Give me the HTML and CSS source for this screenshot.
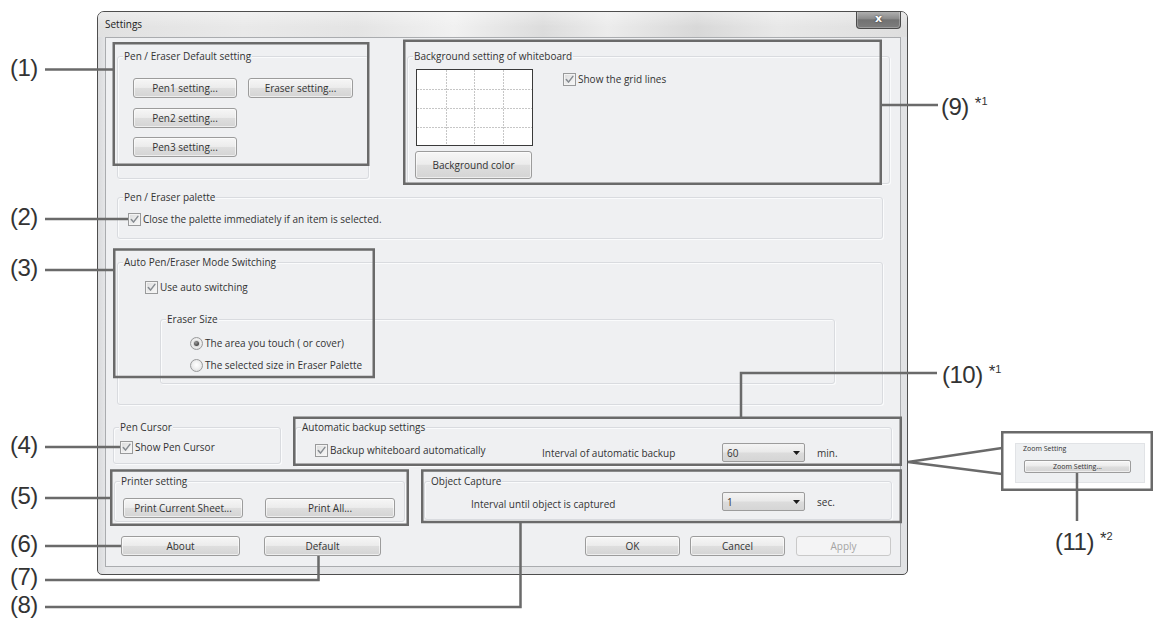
FILE: index.html
```html
<!DOCTYPE html>
<html lang="en">
<head>
<meta charset="utf-8">
<title>Settings</title>
<link rel="stylesheet" href="styles.css">
</head>
<body>
<div class="figure">
  <div class="dialog">
    <div class="titlebar">
      <span class="title">Settings</span>
      <span class="close">x</span>
    </div>
    <div class="client">
      <div class="row row-a">
        <div class="gb gb-pen">
          <div class="gb-title">Pen / Eraser Default setting</div>
          <div class="pen-grid">
            <button class="btn">Pen1 setting...</button>
            <button class="btn">Eraser setting...</button>
            <button class="btn">Pen2 setting...</button>
            <span></span>
            <button class="btn">Pen3 setting...</button>
          </div>
        </div>
        <div class="gb gb-bg">
          <div class="gb-title">Background setting of whiteboard</div>
          <div class="bg-body">
            <div class="bg-left">
              <div class="preview">
                <svg width="115" height="75" viewBox="0 0 115 75">
                  <g stroke="#c6c6c6" stroke-width="1" stroke-dasharray="2 1">
                    <line x1="29.5" y1="0" x2="29.5" y2="75"/>
                    <line x1="57.5" y1="0" x2="57.5" y2="75"/>
                    <line x1="86.5" y1="0" x2="86.5" y2="75"/>
                    <line x1="0" y1="19.5" x2="115" y2="19.5"/>
                    <line x1="0" y1="38.5" x2="115" y2="38.5"/>
                    <line x1="0" y1="57.5" x2="115" y2="57.5"/>
                  </g>
                </svg>
              </div>
              <button class="btn btn-bgcolor">Background color</button>
            </div>
            <label class="check check-grid"><span class="cb"><svg viewBox="0 0 11 11"><path d="M2.3 5.6L4.5 8.1L8.9 2.4"/></svg></span><span>Show the grid lines</span></label>
          </div>
        </div>
      </div>

      <div class="row row-b">
        <div class="gb gb-wide">
          <div class="gb-title">Pen / Eraser palette</div>
          <label class="check check-palette"><span class="cb"><svg viewBox="0 0 11 11"><path d="M2.3 5.6L4.5 8.1L8.9 2.4"/></svg></span><span>Close the palette immediately if an item is selected.</span></label>
        </div>
      </div>

      <div class="row row-c">
        <div class="gb gb-wide gb-auto">
          <div class="gb-title">Auto Pen/Eraser Mode Switching</div>
          <label class="check check-auto"><span class="cb"><svg viewBox="0 0 11 11"><path d="M2.3 5.6L4.5 8.1L8.9 2.4"/></svg></span><span>Use auto switching</span></label>
          <div class="gb gb-eraser">
            <div class="gb-title">Eraser Size</div>
            <div class="radio-list">
              <label class="radio"><span class="rb"><span class="dot"></span></span><span>The area you touch ( or cover)</span></label>
              <label class="radio"><span class="rb"></span><span>The selected size in Eraser Palette</span></label>
            </div>
          </div>
        </div>
      </div>

      <div class="row row-d">
        <div class="gb gb-cursor">
          <div class="gb-title">Pen Cursor</div>
          <label class="check check-cursor"><span class="cb"><svg viewBox="0 0 11 11"><path d="M2.3 5.6L4.5 8.1L8.9 2.4"/></svg></span><span>Show Pen Cursor</span></label>
        </div>
        <div class="gb gb-backup">
          <div class="gb-title">Automatic backup settings</div>
          <div class="field-row backup-row">
            <label class="check check-backup"><span class="cb"><svg viewBox="0 0 11 11"><path d="M2.3 5.6L4.5 8.1L8.9 2.4"/></svg></span><span>Backup whiteboard automatically</span></label>
            <span class="lbl-backup">Interval of automatic backup</span>
            <div class="combo"><span>60</span><svg width="7" height="4" viewBox="0 0 7 4"><path d="M0 0H7L3.5 4Z"/></svg></div>
            <span class="unit">min.</span>
          </div>
        </div>
      </div>

      <div class="row row-e">
        <div class="gb gb-print">
          <div class="gb-title">Printer setting</div>
          <div class="print-row">
            <button class="btn btn-current">Print Current Sheet...</button>
            <button class="btn btn-all">Print All...</button>
          </div>
        </div>
        <div class="gb gb-capture">
          <div class="gb-title">Object Capture</div>
          <div class="field-row capture-row">
            <span class="lbl-capture">Interval until object is captured</span>
            <div class="combo"><span>1</span><svg width="7" height="4" viewBox="0 0 7 4"><path d="M0 0H7L3.5 4Z"/></svg></div>
            <span class="unit">sec.</span>
          </div>
        </div>
      </div>

      <div class="row row-f">
        <button class="btn btn-about">About</button>
        <button class="btn btn-default">Default</button>
        <button class="btn btn-ok">OK</button>
        <button class="btn btn-cancel">Cancel</button>
        <button class="btn btn-apply btn-disabled">Apply</button>
      </div>
    </div>
  </div>

  <div class="inset">
    <div class="zoom-panel">
      <div class="zoom-title">Zoom Setting</div>
      <button class="btn zoom-btn">Zoom Setting...</button>
    </div>
  </div>

  <svg class="annot" width="1159" height="625" viewBox="0 0 1159 625">
    <g fill="none" stroke="#6a6a6a" stroke-width="2.5">
      <rect x="113.75" y="43.25" width="254.5" height="121.5"/>
      <rect x="404.25" y="40.75" width="476.5" height="143"/>
      <rect x="114.25" y="249.5" width="259.5" height="127.5"/>
      <rect x="294.25" y="417.75" width="606.5" height="47"/>
      <rect x="111.25" y="470.5" width="296.5" height="54.25"/>
      <rect x="422.25" y="470.5" width="478.5" height="51.5"/>
      <rect x="1002.25" y="432.25" width="149.5" height="57.5"/>
      <path d="M45 69.5H113"/>
      <path d="M45 219H128"/>
      <path d="M45 270H114"/>
      <path d="M45 447H120"/>
      <path d="M45 498H111"/>
      <path d="M45 546H121"/>
      <path d="M45 580H318.5V556"/>
      <path d="M45 607H520.5V522"/>
      <path d="M881 105H938"/>
      <path d="M741 418V373H937"/>
      <path d="M1077 473V521"/>
      <path d="M1002 448L908 462L1002 474"/>
    </g>
  </svg>

  <span class="lbl l1">(1)</span>
  <span class="lbl l2">(2)</span>
  <span class="lbl l3">(3)</span>
  <span class="lbl l4">(4)</span>
  <span class="lbl l5">(5)</span>
  <span class="lbl l6">(6)</span>
  <span class="lbl l7">(7)</span>
  <span class="lbl l8">(8)</span>
  <span class="lbl l9">(9)<span class="note">*<sup>1</sup></span></span>
  <span class="lbl l10">(10)<span class="note">*<sup>1</sup></span></span>
  <span class="lbl l11">(11)<span class="note">*<sup>2</sup></span></span>
</div>
</body>
</html>
```

FILE: styles.css
```css
* { box-sizing: border-box; }

html, body {
  margin: 0;
  padding: 0;
  background: #ffffff;
}

body {
  font-family: "Open Sans", "Noto Sans", "DejaVu Sans", sans-serif;
  font-size: 10px;
  color: #333333;
}

.figure {
  position: relative;
  width: 1159px;
  height: 625px;
  overflow: hidden;
  padding: 11px 0 0 97px;
}

/* ---------- window ---------- */
.dialog {
  width: 811px;
  height: 564px;
  border: 1px solid #4e4e4e;
  border-radius: 7px 7px 5px 5px;
  background: linear-gradient(90deg, #d9dadc 0%, #e6e7e9 1%, #e1e2e4 100%);
  padding: 0 6px 7px 7px;
  display: flex;
  flex-direction: column;
  overflow: hidden;
}

.titlebar {
  flex: none;
  height: 25px;
  margin: 0 -6px 0 -7px;
  padding: 0 6px 0 7px;
  display: flex;
  justify-content: space-between;
  align-items: flex-start;
  background:
    linear-gradient(180deg, rgba(255,255,255,0.35), rgba(255,255,255,0) 60%),
    linear-gradient(90deg, #e1e1e1 0%, #e9e9e9 18%, #e4e4e4 32%, #f1f1f1 44%, #dcdcdc 55%, #ececec 63%, #d8d8d8 74%, #e8e8e8 84%, #dedede 100%);
}

.title {
  line-height: 25px;
  font-size: 10px;
  color: #1c1c1c;
}

.close {
  width: 45px;
  height: 18px;
  margin-top: -1px;
  border: 1px solid #4a4a4a;
  border-top: none;
  border-radius: 0 0 4px 4px;
  background: linear-gradient(180deg, #b4b4b4 0%, #8c8c8c 45%, #727272 52%, #7d7d7d 100%);
  box-shadow: inset 0 0 0 1px rgba(255,255,255,0.25);
  color: #ffffff;
  font-family: "DejaVu Sans", sans-serif;
  font-weight: bold;
  font-size: 11px;
  line-height: 15px;
  text-align: center;
  text-shadow: 0 0 2px #333;
}

.client {
  flex: none;
  height: 530px;
  border: 1px solid #aaacaf;
  background: #eff0f2;
  display: flex;
  flex-direction: column;
}

/* ---------- rows ---------- */
.row {
  flex: none;
  display: flex;
  align-items: flex-start;
}
.row-a { margin-top: 18px; }
.row-b { margin-top: 13px; }
.row-c { margin-top: 23px; }
.row-d { margin-top: 22px; }
.row-e { margin-top: 15px; }
.row-f { margin-top: 14px; }

/* ---------- group boxes ---------- */
.gb {
  flex: none;
  border: 1px solid #d9dbdf;
  border-radius: 3px;
  box-shadow: inset 1px 1px 0 #fafbfc, 1px 1px 0 #fafbfc;
}

.gb-title {
  display: table;
  margin: -8px 0 0 5px;
  padding: 0 1px;
  line-height: 14px;
  background: #eff0f2;
  white-space: nowrap;
}

.gb-pen { margin-left: 11px; width: 252px; height: 123px; }
.gb-bg { margin-left: 38px; width: 483px; height: 128px; }
.gb-wide { margin-left: 11px; width: 766px; height: 42px; }
.gb-auto { height: 143px; }
.gb-eraser { margin: 25px 0 0 42px; width: 675px; height: 65px; }
.gb-cursor { margin-left: 7px; width: 168px; height: 37px; }
.gb-backup { margin-left: 14px; width: 597px; height: 39px; }
.gb-print { margin-left: 8px; width: 291px; height: 41px; }
.gb-capture { margin-left: 19px; width: 468px; height: 39px; }

/* ---------- pen buttons ---------- */
.pen-grid {
  display: grid;
  grid-template-columns: 104px 105px;
  grid-auto-rows: 20px;
  column-gap: 11px;
  row-gap: 9.5px;
  margin: 15px 0 0 15px;
}

/* ---------- background ---------- */
.bg-body {
  display: flex;
  align-items: flex-start;
  margin: 6px 0 0 8px;
}
.preview {
  width: 117px;
  height: 77px;
  border: 1px solid #3a3a3a;
  background: #ffffff;
}
.preview svg { display: block; }
.btn.btn-bgcolor {
  display: block;
  width: 117px;
  height: 28px;
  margin: 5px 0 0 -1px;
  line-height: 26px;
}
.check-grid { margin: 4px 0 0 30px; }

/* ---------- buttons ---------- */
.btn {
  font: inherit;
  color: #333333;
  height: 20px;
  padding: 0;
  margin: 0;
  border: 1px solid #9c9c9c;
  border-radius: 3px;
  background: linear-gradient(180deg, #f6f6f6 0%, #ececec 47%, #dedede 52%, #d4d4d4 100%);
  box-shadow: inset 0 0 0 1px rgba(255,255,255,0.6);
  line-height: 18px;
  text-align: center;
  white-space: nowrap;
}
.btn-disabled {
  color: #a4a4a4;
  border-color: #c9c9c9;
  background: #f4f4f5;
  box-shadow: none;
}

.print-row {
  display: flex;
  gap: 22px;
  margin: 10px 0 0 8px;
}
.btn-current { width: 120px; }
.btn-all { width: 130px; }

.btn-about { margin-left: 15px; width: 119px; }
.btn-default { margin-left: 24px; width: 117px; }
.btn-ok { margin-left: 204px; width: 95px; }
.btn-cancel { margin-left: 10px; width: 95px; }
.btn-apply { margin-left: 11px; width: 95px; }

/* ---------- checkbox / radio ---------- */
.check, .radio {
  display: flex;
  align-items: center;
  gap: 2px;
  line-height: 13px;
  white-space: nowrap;
  width: max-content;
}
.cb {
  flex: none;
  width: 13px;
  height: 13px;
  border: 1px solid #999a9b;
  background: linear-gradient(135deg, #d9dadb 0%, #eeeeee 60%, #f8f8f8 100%);
  box-shadow: inset 0 0 0 1px #f3f3f3;
  display: flex;
  align-items: center;
  justify-content: center;
}
.cb svg {
  width: 11px;
  height: 11px;
  display: block;
}
.cb path {
  fill: none;
  stroke: #868b91;
  stroke-width: 1.5;
  stroke-linecap: round;
  stroke-linejoin: round;
}
.check-palette { margin: 9px 0 0 10px; }
.check-auto { margin: 12px 0 0 27px; }
.check-cursor { margin: 7px 0 0 6px; }

.radio-list {
  display: flex;
  flex-direction: column;
  gap: 8px;
  margin: 10px 0 0 29px;
}
.radio { height: 14px; }
.rb {
  flex: none;
  width: 13px;
  height: 13px;
  border-radius: 50%;
  border: 1px solid #999a9b;
  background: radial-gradient(circle at 50% 45%, #ffffff 0%, #f0f0f0 45%, #d3d4d5 100%);
  display: flex;
  align-items: center;
  justify-content: center;
}
.dot {
  width: 5px;
  height: 5px;
  border-radius: 50%;
  background: radial-gradient(circle at 40% 35%, #9a9a9a 0%, #444444 70%, #333333 100%);
  box-shadow: 0 0 0 1px #d8d8d8;
}

/* ---------- field rows ---------- */
.field-row {
  display: flex;
  align-items: center;
  height: 19px;
}
.backup-row { margin: 9px 0 0 19px; }
.check-backup { width: 227px; margin-bottom: 5px; }
.lbl-backup { width: 180px; white-space: nowrap; }
.capture-row { margin: 4px 0 0 46px; }
.lbl-capture { width: 251px; margin-top: 4px; white-space: nowrap; }

.combo {
  flex: none;
  width: 83px;
  height: 19px;
  border: 1px solid #9c9c9c;
  border-radius: 2px;
  background: linear-gradient(180deg, #f4f4f4 0%, #e9e9e9 48%, #dcdcdc 52%, #d5d5d5 100%);
  display: flex;
  align-items: center;
  justify-content: space-between;
  padding: 0 4px 0 4px;
}
.combo svg { display: block; }
.combo path { fill: #1a1a1a; }
.unit { margin-left: 12px; }

/* ---------- zoom inset ---------- */
.inset {
  position: absolute;
  left: 1001px;
  top: 431px;
  width: 152px;
  height: 60px;
  padding: 12px 0 0 14px;
  background: #ffffff;
}
.zoom-panel {
  width: 130px;
  height: 40px;
  background: #eef0f2;
  border: 1px solid #e1e3e6;
}
.zoom-title {
  font-size: 7px;
  line-height: 10px;
  margin-left: 7px;
  white-space: nowrap;
}
.btn.zoom-btn {
  display: block;
  width: 107px;
  height: 13px;
  margin: 6px 0 0 8px;
  font-size: 7px;
  line-height: 11px;
  border-radius: 2px;
}

/* ---------- annotations ---------- */
.annot {
  position: absolute;
  left: 0;
  top: 0;
  pointer-events: none;
}

.lbl {
  position: absolute;
  font-family: "Liberation Sans", Arial, sans-serif;
  font-size: 24px;
  line-height: 24px;
  letter-spacing: -0.5px;
  color: #333333;
  white-space: nowrap;
}
.note {
  font-size: 17px;
  vertical-align: 6px;
  margin-left: 6px;
  letter-spacing: 0;
}
.note sup {
  font-size: 11px;
  vertical-align: 4px;
  line-height: 0;
}

.l1 { left: 10px; top: 56px; }
.l2 { left: 10px; top: 205px; }
.l3 { left: 10px; top: 256px; }
.l4 { left: 10px; top: 433px; }
.l5 { left: 10px; top: 484px; }
.l6 { left: 10px; top: 532px; }
.l7 { left: 10px; top: 565px; }
.l8 { left: 10px; top: 593px; }
.l9 { left: 941px; top: 92px; }
.l10 { left: 942px; top: 360px; }
.l11 { left: 1055px; top: 527px; }
```
